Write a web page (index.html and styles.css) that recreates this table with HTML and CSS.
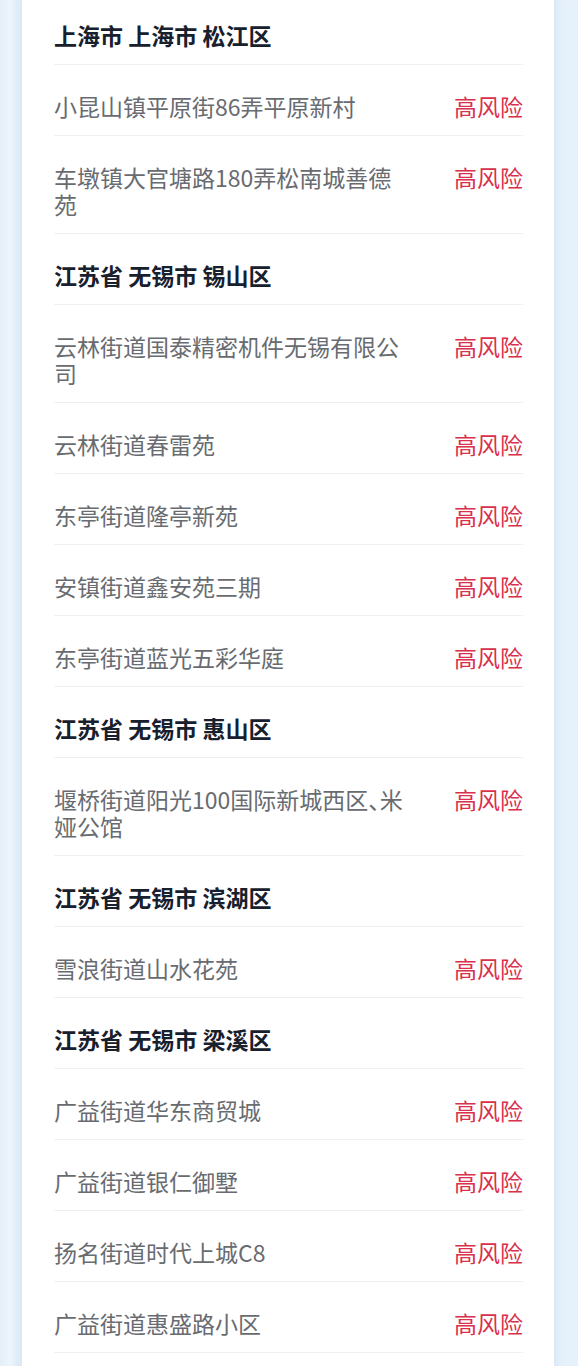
FILE: index.html
```html
<!DOCTYPE html>
<html lang="zh-CN">
<head>
    <meta charset="UTF-8">
    <meta name="viewport" content="width=device-width, initial-scale=1.0">
    <title>风险地区</title>
    <link rel="stylesheet" href="styles.css">
</head>
<body>
    <div class="card">
        <div class="row area">上海市 上海市 松江区</div>
        <div class="row"><span class="place">小昆山镇平原街86弄平原新村</span><span class="level">高风险</span></div>
        <div class="row"><span class="place">车墩镇大官塘路180弄松南城善德苑</span><span class="level">高风险</span></div>

        <div class="row area">江苏省 无锡市 锡山区</div>
        <div class="row"><span class="place">云林街道国泰精密机件无锡有限公司</span><span class="level">高风险</span></div>
        <div class="row"><span class="place">云林街道春雷苑</span><span class="level">高风险</span></div>
        <div class="row"><span class="place">东亭街道隆亭新苑</span><span class="level">高风险</span></div>
        <div class="row"><span class="place">安镇街道鑫安苑三期</span><span class="level">高风险</span></div>
        <div class="row"><span class="place">东亭街道蓝光五彩华庭</span><span class="level">高风险</span></div>

        <div class="row area">江苏省 无锡市 惠山区</div>
        <div class="row"><span class="place">堰桥街道阳光100国际新城西区、米娅公馆</span><span class="level">高风险</span></div>

        <div class="row area">江苏省 无锡市 滨湖区</div>
        <div class="row"><span class="place">雪浪街道山水花苑</span><span class="level">高风险</span></div>

        <div class="row area">江苏省 无锡市 梁溪区</div>
        <div class="row"><span class="place">广益街道华东商贸城</span><span class="level">高风险</span></div>
        <div class="row"><span class="place">广益街道银仁御墅</span><span class="level">高风险</span></div>
        <div class="row"><span class="place">扬名街道时代上城C8</span><span class="level">高风险</span></div>
        <div class="row"><span class="place">广益街道惠盛路小区</span><span class="level">高风险</span></div>
    </div>
</body>
</html>
```

FILE: styles.css
```css
body {
    margin: 0;
    font-family: "Noto Sans CJK SC", "Noto Sans", sans-serif;
    background: linear-gradient(to right, #e4eff9 0, #eef5fc 10px, #e4eff9 16px, #e6f1fb 22px);
    min-height: 100vh;
    overflow: hidden;
}

.card {
    margin: -6px 24px 0 22px;
    padding: 0 31px 60px 32px;
    background: #ffffff;
    box-shadow: 0 0 10px rgba(190, 215, 240, 0.6);
}

.row {
    display: flex;
    gap: 45px;
    padding: 28px 0 15px;
    font-size: 23px;
    line-height: 27px;
    border-bottom: 1px solid #eef0f2;
}

.area {
    font-weight: bold;
    color: #17202c;
}

.place {
    flex: 1;
    color: #686b70;
    font-feature-settings: "halt";
}

.level {
    flex: none;
    color: #d9304b;
}
```
